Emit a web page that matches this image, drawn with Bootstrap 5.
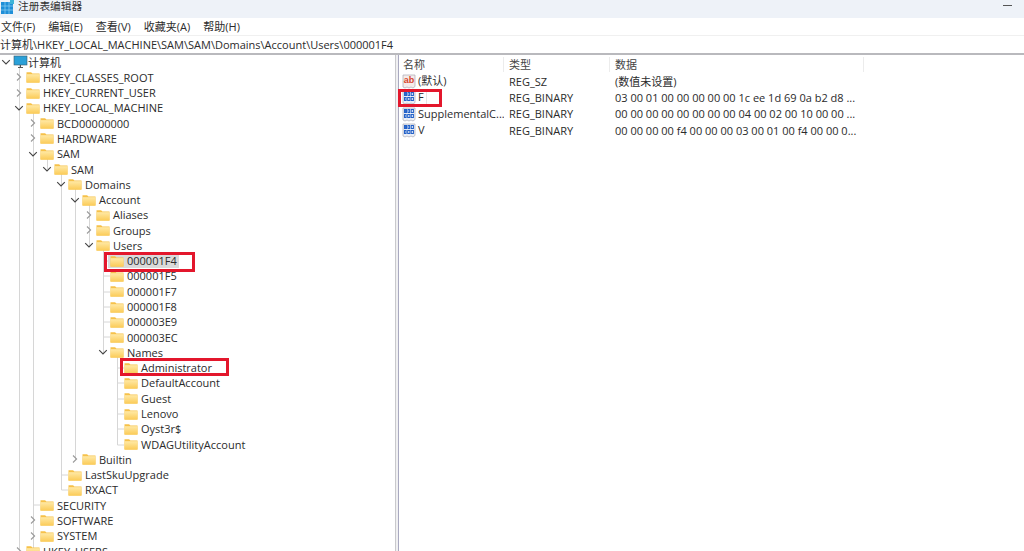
<!DOCTYPE html>
<html lang="zh-CN">
<head>
<meta charset="utf-8">
<title>注册表编辑器</title>
<link href="https://cdn.jsdelivr.net/npm/bootstrap@5.3.0/dist/css/bootstrap.min.css" rel="stylesheet">
<style>
html,body{height:551px;overflow:hidden;background:#fff}
body{font-family:"Open Sans","Noto Sans CJK SC",sans-serif;font-size:11px;line-height:15px;color:#2b2b2b;position:relative}
.reg-title{height:18px;background:#eef2f8;padding-left:1px}
.reg-title .ttl{margin-left:4px;font-size:10.7px;line-height:13px;color:#333}
.reg-min{margin-left:auto;margin-right:12px;margin-top:5px;width:9px;height:1px;background:#555}
.reg-menu{height:18px;padding-left:1px;gap:13px;border-bottom:1px solid #f0f0f0}
.reg-addr{height:17px;padding-left:0;white-space:nowrap}
.reg-sep{height:2px;background:#b9b9bd}
.reg-main{height:497px;overflow:hidden}
.reg-tree{width:395px;flex:none;position:relative;overflow:hidden;margin-top:-.6px}
.reg-split{width:4px;flex:none;background:#f0f0f2;border-left:1px solid #c9c9cc;border-right:1px solid #a9a9c0}
.reg-list{flex:1 1 auto;min-width:0}
.tr-row{height:15.29px;align-items:center;white-space:nowrap;position:relative}
.tr-chev{width:11px;flex:none;height:10px;margin-right:1px}
.tr-chev svg{display:block}
.tr-fold{flex:none;width:14px;height:12px;margin-right:3px}
.tr-pc{flex:none;width:15px;height:14px}
.tr-lab{padding:0 2px 0 0}
.tr-sel{background:#dadada;margin-left:-2px;padding-left:2px;align-items:center;height:15px}
.tr-lines{position:absolute;left:0;top:0;pointer-events:none}
.d0{padding-left:1px}.d1{padding-left:14px}.d2{padding-left:28px}.d3{padding-left:42px}.d4{padding-left:56px}.d5{padding-left:70px}.d6{padding-left:84px}.d7{padding-left:98px}.d8{padding-left:112px}
.ls-head{height:18px;color:#444;align-items:center}
.ls-head>div{height:15px;border-right:1px solid #ececec}
.ls-head .c-name{padding-left:4px}
.c-name{width:105px;flex:none;white-space:nowrap;overflow:hidden;padding-left:3px}
.c-type{width:106px;flex:none;padding-left:5px;white-space:nowrap}
.c-data{width:254px;flex:none;padding-left:5px;white-space:nowrap;overflow:hidden}
.ls-row{height:16.3px;align-items:center}
.ls-ico{width:14px;height:15px;margin-right:2px;vertical-align:-4px}
.red-box{position:absolute;border:3px solid #e3172c;pointer-events:none}
.rb1{left:104px;top:252px;width:91px;height:20px}
.rb2{left:120px;top:358px;width:109px;height:18px}
.rb3{left:398px;top:89px;width:44px;height:18px}
.f-edit{position:absolute;left:426px;top:92px;width:1px;height:12px;background:#e4e4e4}
</style>
</head>
<body>
<svg width="0" height="0" class="position-absolute">
<defs>
<linearGradient id="fg" x1="0" y1="0" x2="0" y2="1"><stop offset="0" stop-color="#ffe9a6"/><stop offset="1" stop-color="#fbcb57"/></linearGradient>
<symbol id="fold" viewBox="0 0 14 12"><path d="M0.5 1.2h4.6l1.3 1.4h7.1v9h-13z" fill="#f6c14a"/><rect x="0.5" y="3.2" width="13" height="8.4" fill="url(#fg)"/></symbol>
<symbol id="cr" viewBox="0 0 10 10"><path d="M3 1.5l3.6 3.5L3 8.5" fill="none" stroke="#9a9a9a" stroke-width="1.1"/></symbol>
<symbol id="cd" viewBox="0 0 10 10"><path d="M1.2 3.2L5 7l3.8-3.8" fill="none" stroke="#444" stroke-width="1.1"/></symbol>
<symbol id="bin" viewBox="0 0 14 15"><path d="M1 1h12v11.5l-2 1.5-2-1-2 1-2-1-2 1-2-1z" fill="#eef1f8" stroke="#a9a9b5" stroke-width=".7"/><g fill="none" stroke="#2462c8" stroke-width="1.05"><rect x="2.5" y="2.5" width="2" height="3"/><rect x="6" y="2.5" width="1.6" height="3"/><rect x="9.2" y="2.5" width="2.2" height="3"/><rect x="2.5" y="7.5" width="1.6" height="3"/><rect x="5.7" y="7.5" width="2.2" height="3"/><rect x="9.2" y="7.5" width="2.2" height="3"/></g></symbol>
</defs>
</svg>

<div class="reg-title d-flex align-items-start">
<svg width="13" height="14" viewBox="0 0 13 14"><rect width="12" height="12" y="2" fill="#1f8fd8"/><path d="M4 2v12M8 2v12M0 6h12M0 10h12" stroke="#8fd0f2" stroke-width=".7"/><rect x="9" y="0" width="4" height="4" fill="#3fb4d8"/></svg>
<span class="ttl">注册表编辑器</span>
<span class="reg-min"></span>
</div>
<div class="reg-menu d-flex align-items-center"><span>文件(F)</span><span>编辑(E)</span><span>查看(V)</span><span>收藏夹(A)</span><span>帮助(H)</span></div>
<div class="reg-addr d-flex align-items-center">计算机\HKEY_LOCAL_MACHINE\SAM\SAM\Domains\Account\Users\000001F4</div>
<div class="reg-sep"></div>

<div class="reg-main d-flex">
<div class="reg-tree">
<svg class="tr-lines" width="395" height="497"><path fill="none" stroke="#d6d6d6" stroke-width="1" d="M19.5 8V497M33.5 54V497M47.5 100V115M61.5 115V436H68M75.5 131V406M89.5 146V192M103.5 192V299M117.5 299V391M103.5 207H110M103.5 222H110M103.5 238H110M103.5 253H110M103.5 268H110M103.5 283H110M117.5 314H124M117.5 329H124M117.5 345H124M117.5 360H124M117.5 375H124M117.5 391H124M61.5 421H68M33.5 451H40"/></svg>

<div class="tr-row d-flex d0"><span class="tr-chev"><svg width="10" height="10"><use href="#cd"/></svg></span><svg viewBox="0 0 15 14" class="tr-pc"><rect x="1" y="1" width="13" height="9" fill="#2aa0d8" stroke="#3d5a6c" stroke-width=".6"/><path d="M5 12.5h5M7.5 10v2.5" stroke="#555"/></svg><span class="tr-lab">计算机</span></div>
<div class="tr-row d-flex d1"><span class="tr-chev"><svg width="10" height="10"><use href="#cr"/></svg></span><svg class="tr-fold"><use href="#fold"/></svg><span class="tr-lab">HKEY_CLASSES_ROOT</span></div>
<div class="tr-row d-flex d1"><span class="tr-chev"><svg width="10" height="10"><use href="#cr"/></svg></span><svg class="tr-fold"><use href="#fold"/></svg><span class="tr-lab">HKEY_CURRENT_USER</span></div>
<div class="tr-row d-flex d1"><span class="tr-chev"><svg width="10" height="10"><use href="#cd"/></svg></span><svg class="tr-fold"><use href="#fold"/></svg><span class="tr-lab">HKEY_LOCAL_MACHINE</span></div>
<div class="tr-row d-flex d2"><span class="tr-chev"><svg width="10" height="10"><use href="#cr"/></svg></span><svg class="tr-fold"><use href="#fold"/></svg><span class="tr-lab">BCD00000000</span></div>
<div class="tr-row d-flex d2"><span class="tr-chev"><svg width="10" height="10"><use href="#cr"/></svg></span><svg class="tr-fold"><use href="#fold"/></svg><span class="tr-lab">HARDWARE</span></div>
<div class="tr-row d-flex d2"><span class="tr-chev"><svg width="10" height="10"><use href="#cd"/></svg></span><svg class="tr-fold"><use href="#fold"/></svg><span class="tr-lab">SAM</span></div>
<div class="tr-row d-flex d3"><span class="tr-chev"><svg width="10" height="10"><use href="#cd"/></svg></span><svg class="tr-fold"><use href="#fold"/></svg><span class="tr-lab">SAM</span></div>
<div class="tr-row d-flex d4"><span class="tr-chev"><svg width="10" height="10"><use href="#cd"/></svg></span><svg class="tr-fold"><use href="#fold"/></svg><span class="tr-lab">Domains</span></div>
<div class="tr-row d-flex d5"><span class="tr-chev"><svg width="10" height="10"><use href="#cd"/></svg></span><svg class="tr-fold"><use href="#fold"/></svg><span class="tr-lab">Account</span></div>
<div class="tr-row d-flex d6"><span class="tr-chev"><svg width="10" height="10"><use href="#cr"/></svg></span><svg class="tr-fold"><use href="#fold"/></svg><span class="tr-lab">Aliases</span></div>
<div class="tr-row d-flex d6"><span class="tr-chev"><svg width="10" height="10"><use href="#cr"/></svg></span><svg class="tr-fold"><use href="#fold"/></svg><span class="tr-lab">Groups</span></div>
<div class="tr-row d-flex d6"><span class="tr-chev"><svg width="10" height="10"><use href="#cd"/></svg></span><svg class="tr-fold"><use href="#fold"/></svg><span class="tr-lab">Users</span></div>
<div class="tr-row d-flex d7"><span class="tr-chev"></span><span class="tr-sel d-flex"><svg class="tr-fold"><use href="#fold"/></svg><span class="tr-lab">000001F4</span></span></div>
<div class="tr-row d-flex d7"><span class="tr-chev"></span><svg class="tr-fold"><use href="#fold"/></svg><span class="tr-lab">000001F5</span></div>
<div class="tr-row d-flex d7"><span class="tr-chev"></span><svg class="tr-fold"><use href="#fold"/></svg><span class="tr-lab">000001F7</span></div>
<div class="tr-row d-flex d7"><span class="tr-chev"></span><svg class="tr-fold"><use href="#fold"/></svg><span class="tr-lab">000001F8</span></div>
<div class="tr-row d-flex d7"><span class="tr-chev"></span><svg class="tr-fold"><use href="#fold"/></svg><span class="tr-lab">000003E9</span></div>
<div class="tr-row d-flex d7"><span class="tr-chev"></span><svg class="tr-fold"><use href="#fold"/></svg><span class="tr-lab">000003EC</span></div>
<div class="tr-row d-flex d7"><span class="tr-chev"><svg width="10" height="10"><use href="#cd"/></svg></span><svg class="tr-fold"><use href="#fold"/></svg><span class="tr-lab">Names</span></div>
<div class="tr-row d-flex d8"><span class="tr-chev"></span><svg class="tr-fold"><use href="#fold"/></svg><span class="tr-lab">Administrator</span></div>
<div class="tr-row d-flex d8"><span class="tr-chev"></span><svg class="tr-fold"><use href="#fold"/></svg><span class="tr-lab">DefaultAccount</span></div>
<div class="tr-row d-flex d8"><span class="tr-chev"></span><svg class="tr-fold"><use href="#fold"/></svg><span class="tr-lab">Guest</span></div>
<div class="tr-row d-flex d8"><span class="tr-chev"></span><svg class="tr-fold"><use href="#fold"/></svg><span class="tr-lab">Lenovo</span></div>
<div class="tr-row d-flex d8"><span class="tr-chev"></span><svg class="tr-fold"><use href="#fold"/></svg><span class="tr-lab">Oyst3r$</span></div>
<div class="tr-row d-flex d8"><span class="tr-chev"></span><svg class="tr-fold"><use href="#fold"/></svg><span class="tr-lab">WDAGUtilityAccount</span></div>
<div class="tr-row d-flex d5"><span class="tr-chev"><svg width="10" height="10"><use href="#cr"/></svg></span><svg class="tr-fold"><use href="#fold"/></svg><span class="tr-lab">Builtin</span></div>
<div class="tr-row d-flex d4"><span class="tr-chev"></span><svg class="tr-fold"><use href="#fold"/></svg><span class="tr-lab">LastSkuUpgrade</span></div>
<div class="tr-row d-flex d4"><span class="tr-chev"></span><svg class="tr-fold"><use href="#fold"/></svg><span class="tr-lab">RXACT</span></div>
<div class="tr-row d-flex d2"><span class="tr-chev"></span><svg class="tr-fold"><use href="#fold"/></svg><span class="tr-lab">SECURITY</span></div>
<div class="tr-row d-flex d2"><span class="tr-chev"><svg width="10" height="10"><use href="#cr"/></svg></span><svg class="tr-fold"><use href="#fold"/></svg><span class="tr-lab">SOFTWARE</span></div>
<div class="tr-row d-flex d2"><span class="tr-chev"><svg width="10" height="10"><use href="#cr"/></svg></span><svg class="tr-fold"><use href="#fold"/></svg><span class="tr-lab">SYSTEM</span></div>
<div class="tr-row d-flex d1"><span class="tr-chev"><svg width="10" height="10"><use href="#cr"/></svg></span><svg class="tr-fold"><use href="#fold"/></svg><span class="tr-lab">HKEY_USERS</span></div>
</div>
<div class="reg-split"></div>
<div class="reg-list">
<div class="ls-head d-flex"><div class="c-name">名称</div><div class="c-type">类型</div><div class="c-data">数据</div></div>
<div class="ls-row d-flex"><div class="c-name"><svg class="ls-ico" viewBox="0 0 14 15"><path d="M1 1h12v11.5l-2 1.5-2-1-2 1-2-1-2 1-2-1z" fill="#f5ecea" stroke="#a9a9b5" stroke-width=".7"/><text x="7" y="9" text-anchor="middle" font-family="Liberation Sans" font-weight="700" font-size="9" fill="#d8452c">ab</text></svg>(默认)</div><div class="c-type">REG_SZ</div><div class="c-data">(数值未设置)</div></div>
<div class="ls-row d-flex"><div class="c-name"><svg class="ls-ico"><use href="#bin"/></svg>F</div><div class="c-type">REG_BINARY</div><div class="c-data">03 00 01 00 00 00 00 00 1c ee 1d 69 0a b2 d8 ...</div></div>
<div class="ls-row d-flex"><div class="c-name"><svg class="ls-ico"><use href="#bin"/></svg>SupplementalC...</div><div class="c-type">REG_BINARY</div><div class="c-data">00 00 00 00 00 00 00 00 04 00 02 00 10 00 00 ...</div></div>
<div class="ls-row d-flex"><div class="c-name"><svg class="ls-ico"><use href="#bin"/></svg>V</div><div class="c-type">REG_BINARY</div><div class="c-data">00 00 00 00 f4 00 00 00 03 00 01 00 f4 00 00 0...</div></div>
</div>
</div>
<div class="f-edit"></div>
<div class="red-box rb1"></div>
<div class="red-box rb2"></div>
<div class="red-box rb3"></div>
</body>
</html>
